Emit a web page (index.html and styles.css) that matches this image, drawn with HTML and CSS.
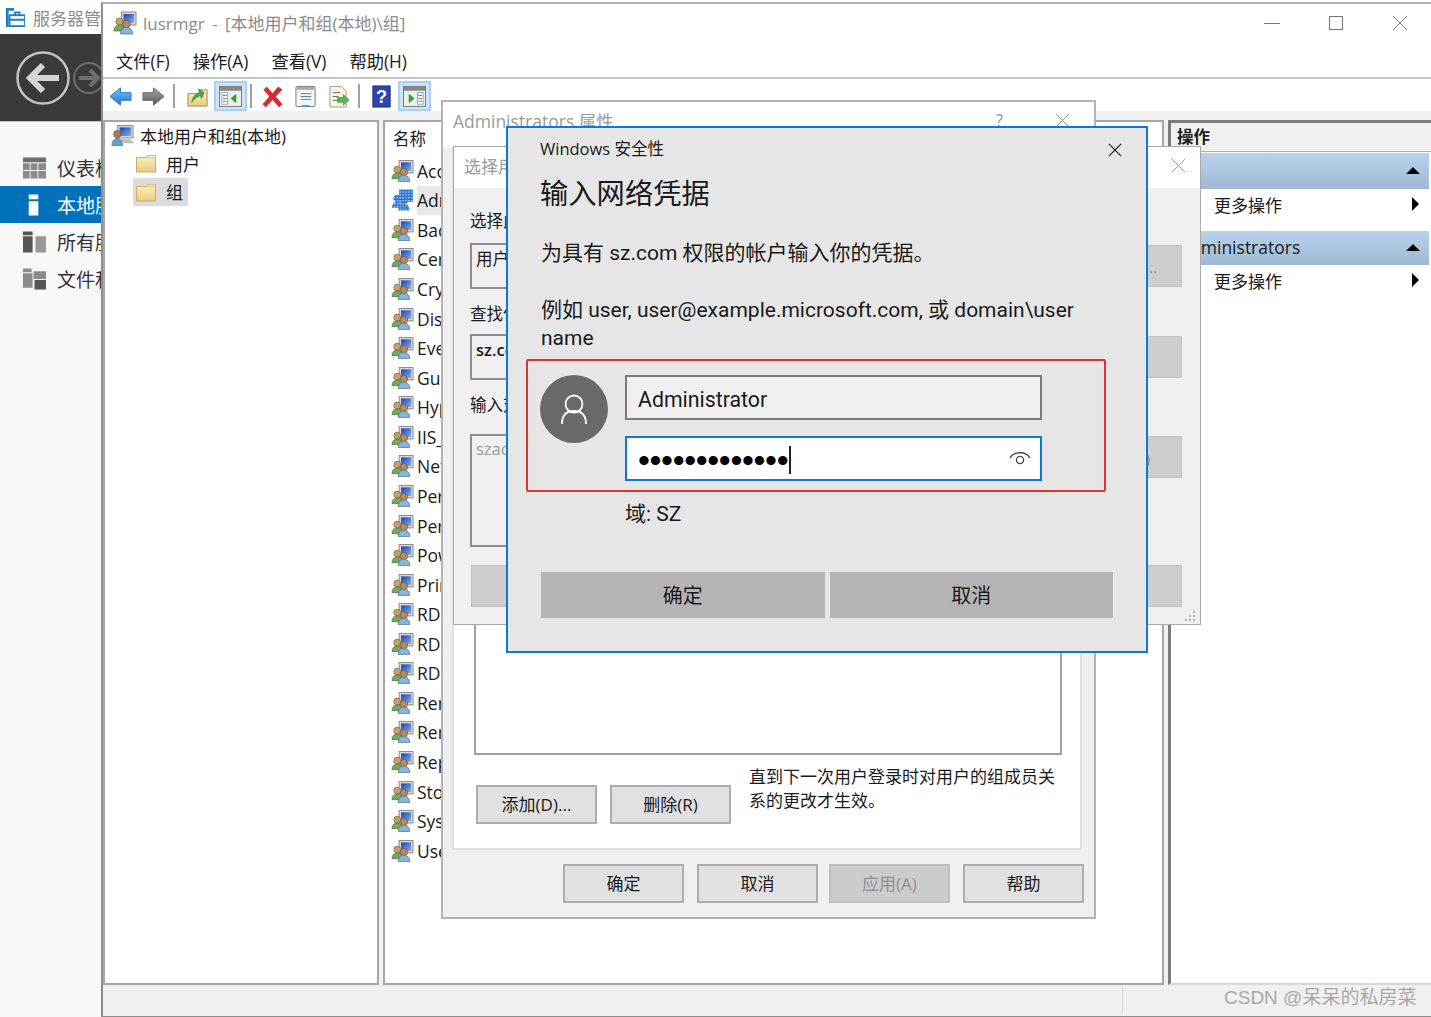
FILE: index.html
```html
<!DOCTYPE html>
<html lang="zh-CN">
<head>
<meta charset="utf-8">
<title>lusrmgr</title>
<link rel="stylesheet" href="styles.css">
</head>
<body>
<svg class="defs" width="0" height="0" aria-hidden="true">
  <defs>
    <linearGradient id="fold" x1="0" y1="0" x2="0" y2="1"><stop offset="0" stop-color="#fdf0c4"/><stop offset="1" stop-color="#eacb7c"/></linearGradient>
    <linearGradient id="mon" x1="0" y1="0" x2="1" y2="1"><stop offset="0" stop-color="#1c3fb0"/><stop offset="1" stop-color="#7fb4ee"/></linearGradient>
    <linearGradient id="blu" x1="0" y1="0" x2="0" y2="1"><stop offset="0" stop-color="#7cc4f4"/><stop offset="1" stop-color="#1878d0"/></linearGradient>
    <linearGradient id="gry" x1="0" y1="0" x2="0" y2="1"><stop offset="0" stop-color="#a8a8a8"/><stop offset="1" stop-color="#585858"/></linearGradient>
    <pattern id="hatch" width="3" height="3" patternUnits="userSpaceOnUse"><rect width="3" height="3" fill="#2a6fd0"/><rect width="1.5" height="1.5" fill="#bcd8f4"/></pattern>
    <symbol id="i-group" viewBox="0 0 24 24">
      <rect x="8.500" y="1" width="14.500" height="13" fill="#d8d8d8" stroke="#8a8a8a"/>
      <rect x="10.500" y="3" width="10.500" height="9" fill="url(#mon)"/>
      <circle cx="6.500" cy="10.500" r="3.600" fill="#c9a06c" stroke="#6a5a3a" stroke-width=".6"/>
      <path d="M1 20c0-4 2.500-6 5.500-6s5.500 2 5.500 6z" fill="#78a860" stroke="#4a6a3a" stroke-width=".7"/>
      <circle cx="13.500" cy="13" r="3.800" fill="#b98a5c" stroke="#5a4a38" stroke-width=".6"/>
      <path d="M7.500 23c0-4.500 2.500-6.500 6-6.500s6 2 6 6.500z" fill="#88b4d8" stroke="#4a6a88" stroke-width=".7"/>
    </symbol>
    <symbol id="i-group-sel" viewBox="0 0 24 24">
      <rect x="8.500" y="1" width="14.500" height="13" fill="url(#hatch)"/>
      <circle cx="6.500" cy="10.500" r="4" fill="url(#hatch)"/>
      <path d="M1 20c0-4 2.500-6 5.500-6s5.500 2 5.500 6z" fill="url(#hatch)"/>
      <circle cx="13.500" cy="13" r="4" fill="url(#hatch)"/>
      <path d="M7.500 23c0-4.500 2.500-6.500 6-6.500s6 2 6 6.500z" fill="url(#hatch)"/>
    </symbol>
    <symbol id="i-computer" viewBox="0 0 24 24">
      <rect x="7" y="1" width="16" height="13" fill="#d8d8d8" stroke="#8a8a8a"/>
      <rect x="9" y="3" width="12" height="9" fill="url(#mon)"/>
      <path d="M10 16h10l3 3H14z" fill="#c8c8c8" stroke="#8a8a8a" stroke-width=".6"/>
      <circle cx="6.500" cy="10" r="3.800" fill="#a87c50" stroke="#5a4a38" stroke-width=".6"/>
      <path d="M1 22c0-5 2.500-7.500 5.500-7.500S12 17 12 22z" fill="#6a9ccc" stroke="#406a92" stroke-width=".7"/>
    </symbol>
    <symbol id="i-folder" viewBox="0 0 20 20">
      <path d="M.5 4.500V19h19V2.500H12L10.500 4.500z" fill="url(#fold)" stroke="#c9ab62"/>
      <path d="M11.500 2.500h8v2h-9z" fill="#fff8e0" stroke="#c9ab62" stroke-width=".6"/>
    </symbol>
  </defs>
</svg>

<div class="desktop">

  <aside class="sm">
    <div class="sm-title">
      <svg class="sm-logo" viewBox="0 0 22 22"><path d="M1 1h9v3H4v18H1z" fill="#1b7fc4"/><rect x="5" y="9" width="17" height="12" fill="none" stroke="#1b7fc4" stroke-width="2"/><path d="M5 14h17M11 9V6h5v3" fill="none" stroke="#1b7fc4" stroke-width="2"/></svg>
      <span class="sm-name">服务器管理器</span>
    </div>
    <div class="sm-head">
      <svg class="sm-back" viewBox="0 0 54 54"><circle cx="27" cy="27" r="25.500" fill="none" stroke="#c4c4c4" stroke-width="2.500"/><path d="M14 27H43M27 14 14 27 27 40" fill="none" stroke="#d4d4d4" stroke-width="6"/></svg>
      <svg class="sm-fwd" viewBox="0 0 32 32"><circle cx="16" cy="16" r="15" fill="none" stroke="#6e6e6e" stroke-width="2"/><path d="M25 16H6M17 8l8 8-8 8" fill="none" stroke="#6e6e6e" stroke-width="4"/></svg>
    </div>
    <nav class="sm-nav">
      <div class="sm-item"><svg class="sm-ico" viewBox="0 0 24 22"><path d="M0 0h24v5H0z" fill="#6e6e6e"/><path d="M0 6h7v7H0zM8 6h7v7H8zM16 6h8v7h-8zM0 14h7v8H0zM8 14h7v8H8zM16 14h8v8h-8z" fill="#8a8a8a"/></svg><span>仪表板</span></div>
      <div class="sm-item is-active"><svg class="sm-ico" viewBox="0 0 24 22"><path d="M6 0h10v5H6zM6 7h10v15H6z" fill="#fff"/></svg><span>本地服务器</span></div>
      <div class="sm-item"><svg class="sm-ico" viewBox="0 0 24 22"><path d="M0 0h10v4H0zM0 5h10v17H0z" fill="#555"/><path d="M13 5h11v17H13z" fill="#999"/></svg><span>所有服务器</span></div>
      <div class="sm-item"><svg class="sm-ico" viewBox="0 0 24 22"><path d="M0 0h9v4H0zM0 5h10v15H0zM11 3h13v8H11z" fill="#8a8a8a"/><path d="M12 12h12v10H12z" fill="#555"/></svg><span>文件和存储服务</span></div>
    </nav>
  </aside>

  <main class="mmc">
    <header class="mmc-title">
      <svg class="mmc-ico"><use href="#i-group"/></svg>
      <span class="mmc-text">lusrmgr - [本地用户和组(本地)\组]</span>
      <div class="win-ctrls">
        <svg viewBox="0 0 16 16"><path d="M0 8.500h16" stroke="#777" fill="none"/></svg>
        <svg viewBox="0 0 16 16"><rect x="1.500" y="1.500" width="13" height="13" fill="none" stroke="#777"/></svg>
        <svg viewBox="0 0 16 16"><path d="M1 1l14 14M15 1 1 15" stroke="#777" fill="none"/></svg>
      </div>
    </header>
    <div class="menu">
      <span>文件(F)</span><span>操作(A)</span><span>查看(V)</span><span>帮助(H)</span>
    </div>
    <div class="toolbar">
      <span class="tb"><svg viewBox="0 0 24 24"><path d="M1 12 12 3v5h11v8H12v5z" fill="url(#blu)" stroke="#2a7ac0"/></svg></span>
      <span class="tb"><svg viewBox="0 0 24 24"><path d="M23 12 12 3v5H1v8h11v5z" fill="url(#gry)" stroke="#666"/></svg></span>
      <i class="tb-sep is-wide"></i>
      <span class="tb"><svg viewBox="0 0 24 24"><path d="M2 9v13h20V5h-7l-2 4z" fill="url(#fold)" stroke="#a88a3e"/><path d="M6 18c1-6 4-9 8-10l-1-4 6 4-3 6-1-3c-3 1-6 3-9 7z" fill="#4aa84a" stroke="#2e7a2e" stroke-width=".6"/></svg></span>
      <span class="tb is-on"><svg viewBox="0 0 24 24"><rect x=".5" y="1.500" width="23" height="21" fill="#eee" stroke="#777"/><rect x="1" y="2" width="22" height="4" fill="#888"/><rect x="3" y="8" width="6" height="12" fill="#fff" stroke="#8aa"/><path d="M4 11h4M4 14h4M4 17h4" stroke="#679"/><path d="M18 9v10l-6-5z" fill="#2ea02e"/></svg></span>
      <i class="tb-sep"></i>
      <span class="tb"><svg viewBox="0 0 24 24"><path d="M3 5 6 2l6 7 6-7 4 3-7 7 7 8-3 3-7-8-7 8-3-3 7-8z" fill="#e4252a" stroke="#b5161a" stroke-width=".6"/></svg></span>
      <span class="tb"><svg viewBox="0 0 24 24"><rect x="2" y="1.500" width="20" height="21" rx="1" fill="#f4f4f4" stroke="#777"/><rect x="3" y="2" width="18" height="3" fill="#aaa"/><path d="M7 9h11M7 12h11M7 15h11" stroke="#5a7ca0"/><path d="M8 21h8v2H8z" fill="#3a9ae0"/></svg></span>
      <span class="tb"><svg viewBox="0 0 24 24"><path d="M3 1.500h12l5 5V23H3z" fill="#f8f4dc" stroke="#999"/><path d="M6 8h8M6 12h6M6 16h5" stroke="#666"/><path d="M11 13h6v-3l6 5.500-6 5.500v-3h-6z" fill="#56b84e" stroke="#2e8a2e" stroke-width=".6"/></svg></span>
      <i class="tb-sep is-mid"></i>
      <span class="tb"><svg viewBox="0 0 24 24"><rect x="3" y="1" width="18" height="22" fill="#2a46b0" stroke="#1a2a70"/><text class="tb-q" x="12" y="19">?</text></svg></span>
      <span class="tb is-on"><svg viewBox="0 0 24 24"><rect x=".5" y="1.500" width="23" height="21" fill="#eee" stroke="#777"/><rect x="1" y="2" width="22" height="4" fill="#888"/><rect x="15" y="8" width="6" height="12" fill="#fff" stroke="#8aa"/><path d="M16 11h4M16 14h4M16 17h4" stroke="#679"/><path d="M6 9v10l6-5z" fill="#2ea02e"/></svg></span>
    </div>
    <div class="panes">
      <section class="tree">
        <div class="tree-row"><svg class="ico24"><use href="#i-computer"/></svg><span>本地用户和组(本地)</span></div>
        <div class="tree-row is-child"><span class="tree-cell"><svg class="ico20"><use href="#i-folder"/></svg><span>用户</span></span></div>
        <div class="tree-row is-child"><span class="tree-cell is-sel"><svg class="ico20"><use href="#i-folder"/></svg><span>组</span></span></div>
      </section>
      <section class="list">
        <div class="list-head">名称</div>
        <div class="list-row"><svg class="ico24"><use href="#i-group"/></svg><span>Access Control Assistance Operators</span></div>
        <div class="list-row is-sel"><svg class="ico24"><use href="#i-group-sel"/></svg><span>Administrators</span></div>
        <div class="list-row"><svg class="ico24"><use href="#i-group"/></svg><span>Backup Operators</span></div>
        <div class="list-row"><svg class="ico24"><use href="#i-group"/></svg><span>Certificate Service DCOM Access</span></div>
        <div class="list-row"><svg class="ico24"><use href="#i-group"/></svg><span>Cryptographic Operators</span></div>
        <div class="list-row"><svg class="ico24"><use href="#i-group"/></svg><span>Distributed COM Users</span></div>
        <div class="list-row"><svg class="ico24"><use href="#i-group"/></svg><span>Event Log Readers</span></div>
        <div class="list-row"><svg class="ico24"><use href="#i-group"/></svg><span>Guests</span></div>
        <div class="list-row"><svg class="ico24"><use href="#i-group"/></svg><span>Hyper-V Administrators</span></div>
        <div class="list-row"><svg class="ico24"><use href="#i-group"/></svg><span>IIS_IUSRS</span></div>
        <div class="list-row"><svg class="ico24"><use href="#i-group"/></svg><span>Network Configuration Operators</span></div>
        <div class="list-row"><svg class="ico24"><use href="#i-group"/></svg><span>Performance Log Users</span></div>
        <div class="list-row"><svg class="ico24"><use href="#i-group"/></svg><span>Performance Monitor Users</span></div>
        <div class="list-row"><svg class="ico24"><use href="#i-group"/></svg><span>Power Users</span></div>
        <div class="list-row"><svg class="ico24"><use href="#i-group"/></svg><span>Print Operators</span></div>
        <div class="list-row"><svg class="ico24"><use href="#i-group"/></svg><span>RDS Endpoint Servers</span></div>
        <div class="list-row"><svg class="ico24"><use href="#i-group"/></svg><span>RDS Management Servers</span></div>
        <div class="list-row"><svg class="ico24"><use href="#i-group"/></svg><span>RDS Remote Access Servers</span></div>
        <div class="list-row"><svg class="ico24"><use href="#i-group"/></svg><span>Remote Desktop Users</span></div>
        <div class="list-row"><svg class="ico24"><use href="#i-group"/></svg><span>Remote Management Users</span></div>
        <div class="list-row"><svg class="ico24"><use href="#i-group"/></svg><span>Replicator</span></div>
        <div class="list-row"><svg class="ico24"><use href="#i-group"/></svg><span>Storage Replica Administrators</span></div>
        <div class="list-row"><svg class="ico24"><use href="#i-group"/></svg><span>System Managed Accounts Group</span></div>
        <div class="list-row"><svg class="ico24"><use href="#i-group"/></svg><span>Users</span></div>
      </section>
      <section class="actions">
        <div class="act-head">操作</div>
        <div class="act-band"><span>组</span><i class="tri-up"></i></div>
        <div class="act-item"><span>更多操作</span><i class="tri-right"></i></div>
        <div class="act-band is-second"><span>Administrators</span><i class="tri-up"></i></div>
        <div class="act-item"><span>更多操作</span><i class="tri-right"></i></div>
      </section>
    </div>
    <footer class="status"><i class="status-div"></i></footer>
  </main>

  <div class="props">
    <div class="props-title">
      <span>Administrators 属性</span>
      <span class="props-q">?</span>
      <svg class="props-x" viewBox="0 0 16 16"><path d="M1 1l14 14M15 1 1 15" stroke="#888" fill="none"/></svg>
    </div>
    <div class="props-page">
      <div class="props-members"></div>
      <div class="props-row">
        <span class="btn">添加(D)...</span>
        <span class="btn">删除(R)</span>
        <p class="props-note">直到下一次用户登录时对用户的组成员关系的更改才生效。</p>
      </div>
    </div>
    <div class="props-foot">
      <span class="btn">确定</span>
      <span class="btn">取消</span>
      <span class="btn is-off">应用(A)</span>
      <span class="btn">帮助</span>
    </div>
  </div>

  <div class="picker">
    <div class="picker-title">
      <span>选择用户、计算机、服务帐户或组</span>
      <svg class="picker-x" viewBox="0 0 16 16"><path d="M1 1l14 14M15 1 1 15" stroke="#999" fill="none"/></svg>
    </div>
    <div class="picker-body">
      <div class="picker-label is-first">选择此对象类型(S):</div>
      <div class="picker-line"><div class="picker-box">用户、组或内置安全主体</div><span class="picker-btn">对象类型(O)...</span></div>
      <div class="picker-label">查找位置(F):</div>
      <div class="picker-line"><div class="picker-box is-bold">sz.com</div><span class="picker-btn">位置(L)...</span></div>
      <div class="picker-label is-last">输入对象名称来选择(示例)(E):</div>
      <div class="picker-line"><div class="picker-box is-tall">szadmin</div><span class="picker-btn">检查名称(C)</span></div>
      <div class="picker-foot"><span class="picker-btn is-left">高级(A)...</span><span class="picker-btn">取消</span></div>
      <svg class="grip" viewBox="0 0 12 12"><path d="M9 1h2v2H9zM5 5h2v2H5zM9 5h2v2H9zM1 9h2v2H1zM5 9h2v2H5zM9 9h2v2H9z" fill="#b4b4b4"/></svg>
    </div>
  </div>

  <div class="sec">
    <div class="sec-top">
      <span>Windows 安全性</span>
      <svg class="sec-x" viewBox="0 0 16 16"><path d="M1 1l14 14M15 1 1 15" stroke="#111" stroke-width="1.300" fill="none"/></svg>
    </div>
    <h1 class="sec-h">输入网络凭据</h1>
    <p class="sec-p">为具有 sz.com 权限的帐户输入你的凭据。</p>
    <p class="sec-p is-ex">例如 user, user@example.microsoft.com, 或 domain\user name</p>
    <div class="cred">
      <div class="avatar"><svg viewBox="0 0 68 68"><circle cx="34" cy="29" r="8.500" fill="none" stroke="#fff" stroke-width="1.800"/><path d="M22 49c0-9 5-13 12-13s12 4 12 13" fill="none" stroke="#fff" stroke-width="1.800"/></svg></div>
      <div class="cred-fields">
        <div class="field">Administrator</div>
        <div class="field is-focus"><span class="dots">•••••••••••••</span><i class="caret"></i>
          <svg class="eye" viewBox="0 0 24 18"><path d="M2 9a11 9 0 0 1 20 0" fill="none" stroke="#444" stroke-width="1.300"/><circle cx="12" cy="11" r="3.600" fill="none" stroke="#444" stroke-width="1.300"/></svg>
        </div>
      </div>
    </div>
    <div class="sec-domain">域: SZ</div>
    <div class="sec-btns"><span class="sec-btn">确定</span><span class="sec-btn">取消</span></div>
  </div>

  <div class="mark">CSDN @呆呆的私房菜</div>
</div>
</body>
</html>
```

FILE: styles.css
```css
* { box-sizing: border-box; }
html, body { margin: 0; padding: 0; background: #fff; }
body { font-family: "Open Sans", "Noto Sans CJK SC", sans-serif; color: #1a1a1a; }
.defs { position: absolute; }
.desktop { position: relative; width: 1431px; height: 1017px; overflow: hidden; background: #fff; }
p, h1 { margin: 0; font-weight: 400; }

/* Server Manager behind */
.sm { position: absolute; left: 0; top: 0; width: 104px; height: 1017px; background: #f8f8f8; overflow: hidden; }
.sm-title { height: 34px; background: #fff; display: flex; align-items: center; gap: 8px; padding-left: 5px; }
.sm-logo { width: 20px; height: 20px; flex: none; }
.sm-name { font-size: 17px; color: #8c8c8c; white-space: nowrap; }
.sm-head { height: 88px; background: #3a3a3a; border-bottom: 1px solid #c8c8c8; display: flex; align-items: center; padding-left: 16px; gap: 3px; }
.sm-back { width: 54px; height: 54px; flex: none; }
.sm-fwd { width: 32px; height: 32px; flex: none; }
.sm-nav { padding-top: 27px; display: flex; flex-direction: column; }
.sm-item { height: 37px; display: flex; align-items: center; gap: 11px; padding-left: 23px; font-size: 19px; white-space: nowrap; color: #333; }
.sm-item.is-active { background: #0072bc; color: #fff; }
.sm-ico { width: 23px; height: 22px; flex: none; }

/* MMC */
.mmc { position: absolute; left: 101px; top: 2px; width: 1330px; height: 1015px; background: #fff; border-left: 2px solid #8e8e8e; border-top: 2px solid #b0b0b0; display: flex; flex-direction: column; }
.mmc-title { height: 40px; display: flex; align-items: center; padding: 0 0 3px 10px; flex: none; }
.mmc-ico { width: 24px; height: 24px; flex: none; }
.mmc-text { font-size: 17px; color: #8a8a8a; margin-left: 6px; white-space: pre; word-spacing: 3px; }
.win-ctrls { margin-left: auto; display: flex; gap: 48px; padding-right: 23px; }
.win-ctrls svg { width: 16px; height: 16px; }
.menu { height: 35px; flex: none; display: flex; align-items: center; gap: 23px; padding-left: 13px; font-size: 17.300px; color: #1a1a1a; border-bottom: 2px solid #c4c4c4; }
.toolbar { height: 32px; flex: none; display: flex; align-items: center; padding: 2px 0 0 1px; background: #fff; }
.tb { width: 33px; height: 30px; display: flex; align-items: center; justify-content: center; flex: none; }
.tb svg { width: 23px; height: 23px; }
.tb.is-on { background: #cfe4f7; border: 2px solid #a8d0f4; }
.tb-sep { width: 2px; height: 24px; background: #a0a0a0; margin: 0 4px 0 3px; flex: none; }
.tb-sep.is-wide { margin-right: 6px; }
.tb-sep.is-mid { margin-right: 5px; }
.tb-q { font-family: "Liberation Sans", sans-serif; font-size: 19px; font-weight: 700; fill: #fff; text-anchor: middle; }
.panes { flex: 1; min-height: 0; background: #f0f0f0; display: flex; gap: 4px; padding-top: 9px; }
.tree { width: 276px; flex: none; background: #fff; border: 2px solid #a6a6a6; padding: 0 0 0 6px; }
.tree-row { height: 28.500px; display: flex; align-items: center; gap: 6px; font-size: 17px; white-space: nowrap; }
.tree-row:first-child { height: 27px; }
.tree-row.is-child { padding-left: 22px; }
.tree-cell { display: flex; align-items: center; gap: 10px; height: 28.500px; padding: 0 5px 0 3px; }
.tree-cell.is-sel { background: #dcdcdc; }
.ico24 { width: 23px; height: 24px; flex: none; }
.ico20 { width: 20px; height: 20px; flex: none; }
.list { width: 781px; flex: none; background: #fff; border: 2px solid #a6a6a6; overflow: hidden; }
.list-head { height: 34px; font-size: 16.500px; padding: 3px 0 0 8px; line-height: 28px; }
.list-row { height: 29.570px; display: flex; align-items: center; gap: 3px; padding-left: 6px; font-size: 17.500px; white-space: nowrap; }
.list-row.is-sel span { background: #e8e8e8; align-self: stretch; display: flex; align-items: center; }
.actions { flex: 1; background: #fff; border-top: 3px solid #7c7c7c; border-left: 3px solid #7c7c7c; border-bottom: 2px solid #d8d8d8; font-size: 17px; }
.act-head { height: 29px; background: #f0f0f0; border-bottom: 1px solid #b0b0b0; font-weight: 700; padding-left: 6px; line-height: 28px; font-size: 16.500px; }
.act-band { height: 36px; margin: 1px 2px 0 0; background: linear-gradient(#bad3ec, #9eb7d4); display: flex; align-items: center; justify-content: space-between; padding: 0 9px 2px 8px; font-size: 17.500px; }
.act-band.is-second { height: 34px; margin-top: 0; }
.act-item { height: 42px; display: flex; align-items: center; justify-content: space-between; padding: 0 12px 12px 43px; }
.tri-up { width: 0; height: 0; border-left: 7px solid transparent; border-right: 7px solid transparent; border-bottom: 7px solid #000; }
.tri-right { width: 0; height: 0; border-top: 7px solid transparent; border-bottom: 7px solid transparent; border-left: 7px solid #000; }
.status { height: 32px; flex: none; background: #f0f0f0; border-bottom: 1px solid #8c8c8c; display: flex; padding-left: 1019px; padding-top: 2px; }
.status-div { width: 1px; height: 26px; background: #d4d4d4; }

/* Properties dialog */
.props { position: absolute; left: 441px; top: 100px; width: 655px; height: 819px; background: #f0f0f0; border: 2px solid #b4b4b4; display: flex; flex-direction: column; }
.props-title { height: 45px; flex: none; background: #fff; display: flex; align-items: flex-start; padding: 6px 24px 0 10px; font-size: 17.500px; color: #9a9a9a; }
.props-q { margin-left: auto; margin-right: 52px; }
.props-x { width: 15px; height: 15px; margin-top: 5px; }
.props-page { margin: 0 12px 0 9px; height: 703px; background: #fff; border: 2px solid #e0e0e0; border-top: 0; padding: 0 18px; display: flex; flex-direction: column; }
.props-members { height: 608px; background: #fff; border: 2px solid #9aa0a8; border-top: 0; margin: 0 0 0 2px; width: 588px; flex: none; }
.props-row { display: flex; gap: 13px; margin-top: 12px; align-items: flex-start; padding-left: 4px; }
.btn { width: 121px; height: 39px; flex: none; background: #e1e1e1; border: 2px solid #adadad; display: flex; align-items: center; justify-content: center; font-size: 17px; padding-bottom: 3px; margin-top: 17px; }
.props-row .btn { margin-top: 18px; }
.props-note { width: 310px; font-size: 17px; line-height: 24px; margin: -2px 0 0 5px; }
.props-foot { display: flex; gap: 13px; padding-left: 120px; margin-top: -3px; }
.btn.is-off { background: #cccccc; border-color: #bfbfbf; color: #8e8e8e; margin-left: -2px; }

/* Object picker */
.picker { position: absolute; left: 453px; top: 146px; width: 748px; height: 479px; background: #f0f0f0; border: 1px solid #a8a8a8; display: flex; flex-direction: column; }
.picker-title { height: 41px; flex: none; background: #fff; display: flex; align-items: center; justify-content: space-between; padding: 0 14px 4px 10px; font-size: 17px; color: #9a9a9a; }
.picker-x { width: 15px; height: 15px; }
.picker-body { flex: 1; position: relative; padding: 21px 18px 0 16px; font-size: 16.500px; }
.picker-label { height: 24px; line-height: 24px; white-space: nowrap; margin-bottom: 8px; }
.picker-label.is-first { margin-bottom: 10px; }
.picker-label.is-last { margin-bottom: 17px; }
.picker-line { display: flex; justify-content: space-between; margin-bottom: 13px; }
.picker-box { width: 640px; height: 46px; border: 2px solid #8c8c8c; padding: 1px 4px; line-height: 26px; background: #f0f0f0; }
.picker-box.is-bold { font-weight: 600; }
.picker-box.is-tall { height: 113px; color: #9a9a9a; padding-top: 0; margin-bottom: -26px; }
.picker-btn { width: 122px; height: 42px; flex: none; background: #cdcdcd; border: 1px solid #c0c0c0; display: flex; align-items: center; justify-content: center; padding-right: 20px; font-size: 15px; color: #888; white-space: nowrap; margin-top: 2px; }
.picker-foot { position: absolute; left: 17px; right: 18px; top: 375px; display: flex; justify-content: space-between; }
.picker-btn.is-left { padding: 0 0 0 40px; }
.grip { position: absolute; right: 4px; bottom: 2px; width: 12px; height: 12px; }

/* Windows Security */
.sec { position: absolute; left: 506px; top: 126px; width: 642px; height: 527px; background: #e6e6e6; border: 2px solid #0f78d4; padding: 9px 33px 0; }
.sec-top { height: 24px; font-size: 16.500px; line-height: 24px; display: flex; justify-content: space-between; align-items: center; margin-left: -1px; margin-right: -9px; }
.sec-x { width: 14px; height: 14px; margin-top: 2px; }
.sec-h { font-size: 28.300px; line-height: 40px; margin-top: 12px; margin-left: -1px; }
.sec-p { font-family: Roboto, "Noto Sans CJK SC", sans-serif; font-size: 21px; line-height: 28px; margin-top: 26px; }
.sec-p.is-ex { margin-top: 29px; width: 560px; }
.cred { width: 580px; height: 133px; margin: 7px 0 0 -15px; border: 2px solid #e53030; border-radius: 2px; display: flex; padding: 14px 0 0 12px; }
.avatar { width: 68px; height: 68px; border-radius: 50%; background: #696969; flex: none; }
.avatar svg { display: block; width: 68px; height: 68px; }
.cred-fields { margin-left: 17px; display: flex; flex-direction: column; gap: 16px; }
.field { font-family: Roboto, sans-serif; width: 417px; height: 45px; border: 2px solid #7c7c7c; background: #f0f0f0; font-size: 21.300px; line-height: 44px; padding: 4px 0 0 11px; white-space: nowrap; display: flex; align-items: center; }
.field.is-focus { background: #fff; border-color: #0f78d4; position: relative; padding-top: 0; }
.dots { font-family: "Liberation Sans", sans-serif; font-size: 34px; letter-spacing: -.35px; color: #000; line-height: 1; margin-top: 2px; }
.caret { width: 2px; height: 28px; background: #222; margin-left: 1px; margin-top: 2px; }
.eye { position: absolute; right: 8px; top: 11px; width: 24px; height: 18px; }
.sec-domain { font-family: Roboto, "Noto Sans CJK SC", sans-serif; font-size: 21px; line-height: 28px; margin: 8px 0 0 84px; }
.sec-btns { display: flex; gap: 5px; margin-top: 44px; width: 572px; }
.sec-btn { flex: 1; height: 46px; background: #b4b4b4; display: flex; align-items: center; justify-content: center; font-size: 20px; padding-bottom: 2px; }

.mark { position: absolute; left: 1224px; top: 985px; font-family: "Liberation Sans", "Noto Sans CJK SC", sans-serif; font-size: 19px; line-height: 26px; color: #a8a8a8; white-space: nowrap; }
```
